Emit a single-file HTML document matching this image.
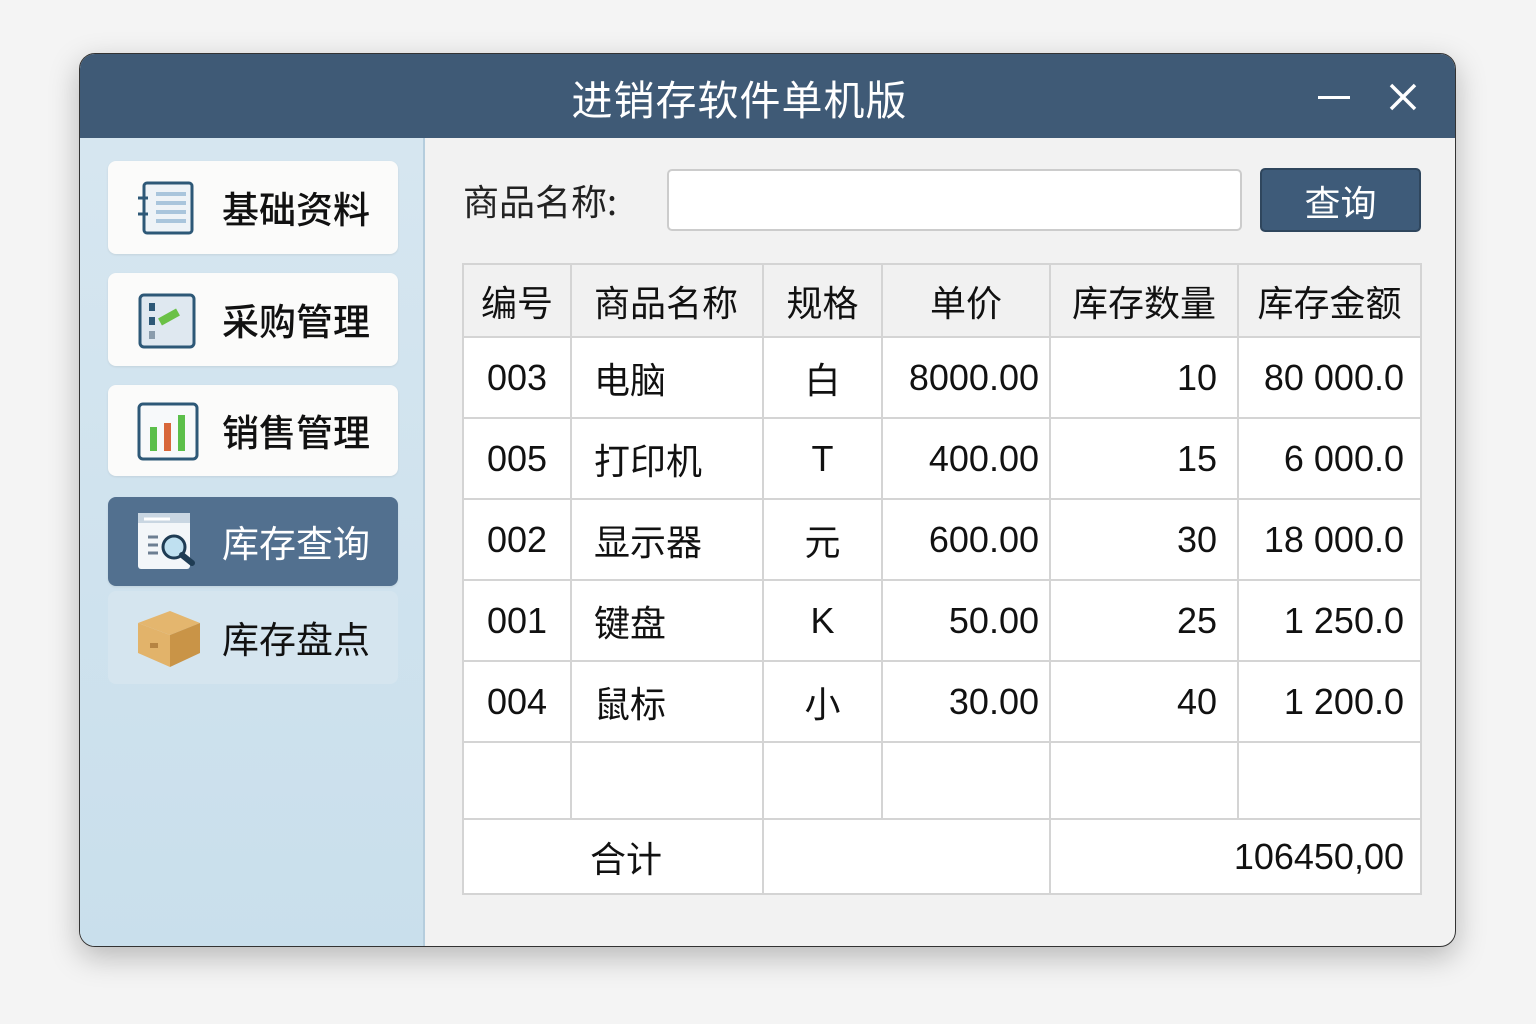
<!DOCTYPE html>
<html><head><meta charset="utf-8"><style>
*{margin:0;padding:0;box-sizing:border-box}
body{width:1536px;height:1024px;background:#f4f4f4;font-family:"Liberation Sans","Noto Sans CJK SC",sans-serif;position:relative;overflow:hidden}
.win{position:absolute;left:79px;top:53px;width:1377px;height:894px;border-radius:16px;overflow:hidden;background:#f2f2f2;box-shadow:0 10px 30px rgba(0,0,0,.25);border:1px solid #333}
.title{position:absolute;left:0;top:0;width:100%;height:84px;background:#3f5a76;color:#fff;font-size:41px;text-align:center;line-height:86px;letter-spacing:1px;padding-right:56px;font-family:"Noto Sans CJK SC",sans-serif}
.side{position:absolute;left:0;top:84px;width:345px;height:810px;background:linear-gradient(#d6e6f0,#c9dfec);border-right:2px solid #b5cddd}
.btn{position:absolute;left:28px;width:290px;background:#fbfbfa;border-radius:8px;font-size:37px;color:#111;box-shadow:0 1px 2px rgba(0,0,0,.08);font-weight:500;font-family:"Noto Sans CJK SC",sans-serif}
.btn span{position:absolute;left:114px;top:50%;transform:translateY(-52%)}
.btn svg{position:absolute;left:28px;top:50%;transform:translateY(-50%)}
.lbl{position:absolute;left:383px;top:120px;font-size:36px;color:#222;font-family:"Noto Sans CJK SC",sans-serif}
.inp{position:absolute;left:587px;top:115px;width:575px;height:62px;background:#fff;border:2px solid #ccc;border-radius:5px}
.q{position:absolute;left:1180px;top:114px;width:161px;height:64px;background:#3e5b79;border-radius:5px;color:#fff;font-size:36px;text-align:center;line-height:62px;border:2px solid #2f465d;font-family:"Noto Sans CJK SC",sans-serif}
table{position:absolute;left:382px;top:209px;width:958px;border-collapse:collapse;background:#fff;font-size:36px;color:#111;table-layout:fixed}
td{border:2px solid #d4d4d4;white-space:nowrap;overflow:hidden;padding:0}
tr.h td{background:#f1f1f1;height:73px;text-align:center}
tr.r td{height:81px}
tr.e td{height:77px}
tr.f td{height:75px}
.c{text-align:center}.l{padding-left:22px}.rt{text-align:right}
</style></head><body>
<div class="win">
<div class="title">进销存软件单机版</div>
<div style="position:absolute;left:1238px;top:42px;width:32px;height:3px;background:#fff"></div>
<svg style="position:absolute;left:1308px;top:28px" width="30" height="30"><path d="M3 3L27 27M27 3L3 27" stroke="#fff" stroke-width="3.5"/></svg>
<div class="side">
<div class="btn" style="top:23px;height:93px"><svg width="60" height="60" viewBox="0 0 60 60"><rect x="8" y="5" width="48" height="50" rx="3" fill="#eef3f7" stroke="#2d5877" stroke-width="3"/><path d="M2 20h10M2 36h10" stroke="#2d5877" stroke-width="3"/><path d="M20 16h30M20 25h30M20 34h30M20 43h30" stroke="#a9c5dc" stroke-width="4"/></svg><span>基础资料</span></div>
<div class="btn" style="top:135px;height:93px"><svg width="60" height="60" viewBox="0 0 60 60"><rect x="4" y="5" width="54" height="52" rx="4" fill="#dfe8f0" stroke="#2d5877" stroke-width="3"/><rect x="13" y="13" width="6" height="8" fill="#2d5877"/><rect x="13" y="27" width="6" height="8" fill="#2d5877"/><rect x="13" y="41" width="6" height="8" fill="#8a9cac"/><path d="M24 32l18-10" stroke="#6ac146" stroke-width="8"/></svg><span>采购管理</span></div>
<div class="btn" style="top:247px;height:91px"><svg width="64" height="60" viewBox="0 0 64 60"><rect x="3" y="3" width="58" height="55" rx="4" fill="#f7f9fa" stroke="#2d5877" stroke-width="3"/><rect x="14" y="26" width="7" height="24" fill="#5bbf4a"/><rect x="28" y="22" width="7" height="28" fill="#d8673a"/><rect x="42" y="14" width="7" height="36" fill="#5bbf4a"/></svg><span>销售管理</span></div>
<div class="btn" style="top:359px;height:89px;background:#52708f;color:#fff;font-weight:400"><svg width="66" height="62" viewBox="0 0 66 62"><rect x="2" y="2" width="52" height="56" rx="3" fill="#f3f6f9"/><rect x="2" y="2" width="52" height="10" fill="#c9d6e2"/><path d="M8 8h26" stroke="#fff" stroke-width="3"/><path d="M12 26h10M12 34h10M12 42h10" stroke="#6d7f92" stroke-width="3"/><circle cx="38" cy="36" r="11" fill="#bfe0f0" stroke="#1f3c54" stroke-width="3"/><path d="M46 44l10 8" stroke="#1f3c54" stroke-width="6" stroke-linecap="round"/></svg><span>库存查询</span></div>
<div class="btn" style="top:453px;height:93px;background:#d5e5ef;box-shadow:none;font-weight:400"><svg width="66" height="62" viewBox="0 0 66 62"><path d="M2 16L34 4L64 16L34 28Z" fill="#e4b66e"/><path d="M2 16V46L34 60V28Z" fill="#e2b36a"/><path d="M64 16V46L34 60V28Z" fill="#c99447"/><rect x="14" y="36" width="8" height="5" fill="#b68442"/></svg><span>库存盘点</span></div>
</div>
<div class="lbl">商品名称:</div>
<div class="inp"></div>
<div class="q">查询</div>
<table>
<colgroup><col style="width:108px"><col style="width:192px"><col style="width:119px"><col style="width:168px"><col style="width:188px"><col style="width:183px"></colgroup>
<tr class="h"><td>编号</td><td class="l" style="text-align:left">商品名称</td><td>规格</td><td>单价</td><td>库存数量</td><td>库存金额</td></tr>
<tr class="r"><td class="c">003</td><td class="l">电脑</td><td class="c">白</td><td class="rt" style="padding-right:10px">8000.00</td><td class="rt" style="padding-right:20px">10</td><td class="rt" style="padding-right:16px">80 000.0</td></tr>
<tr class="r"><td class="c">005</td><td class="l">打印机</td><td class="c">T</td><td class="rt" style="padding-right:10px">400.00</td><td class="rt" style="padding-right:20px">15</td><td class="rt" style="padding-right:16px">6 000.0</td></tr>
<tr class="r"><td class="c">002</td><td class="l">显示器</td><td class="c">元</td><td class="rt" style="padding-right:10px">600.00</td><td class="rt" style="padding-right:20px">30</td><td class="rt" style="padding-right:16px">18 000.0</td></tr>
<tr class="r"><td class="c">001</td><td class="l">键盘</td><td class="c">K</td><td class="rt" style="padding-right:10px">50.00</td><td class="rt" style="padding-right:20px">25</td><td class="rt" style="padding-right:16px">1 250.0</td></tr>
<tr class="r"><td class="c">004</td><td class="l">鼠标</td><td class="c">小</td><td class="rt" style="padding-right:10px">30.00</td><td class="rt" style="padding-right:20px">40</td><td class="rt" style="padding-right:16px">1 200.0</td></tr>
<tr class="e"><td></td><td></td><td></td><td></td><td></td><td></td></tr>
<tr class="f"><td colspan="2" style="padding-left:126px">合计</td><td colspan="2"></td><td colspan="2" class="rt" style="padding-right:16px">106450,00</td></tr>
</table>
</div>
</body></html>
